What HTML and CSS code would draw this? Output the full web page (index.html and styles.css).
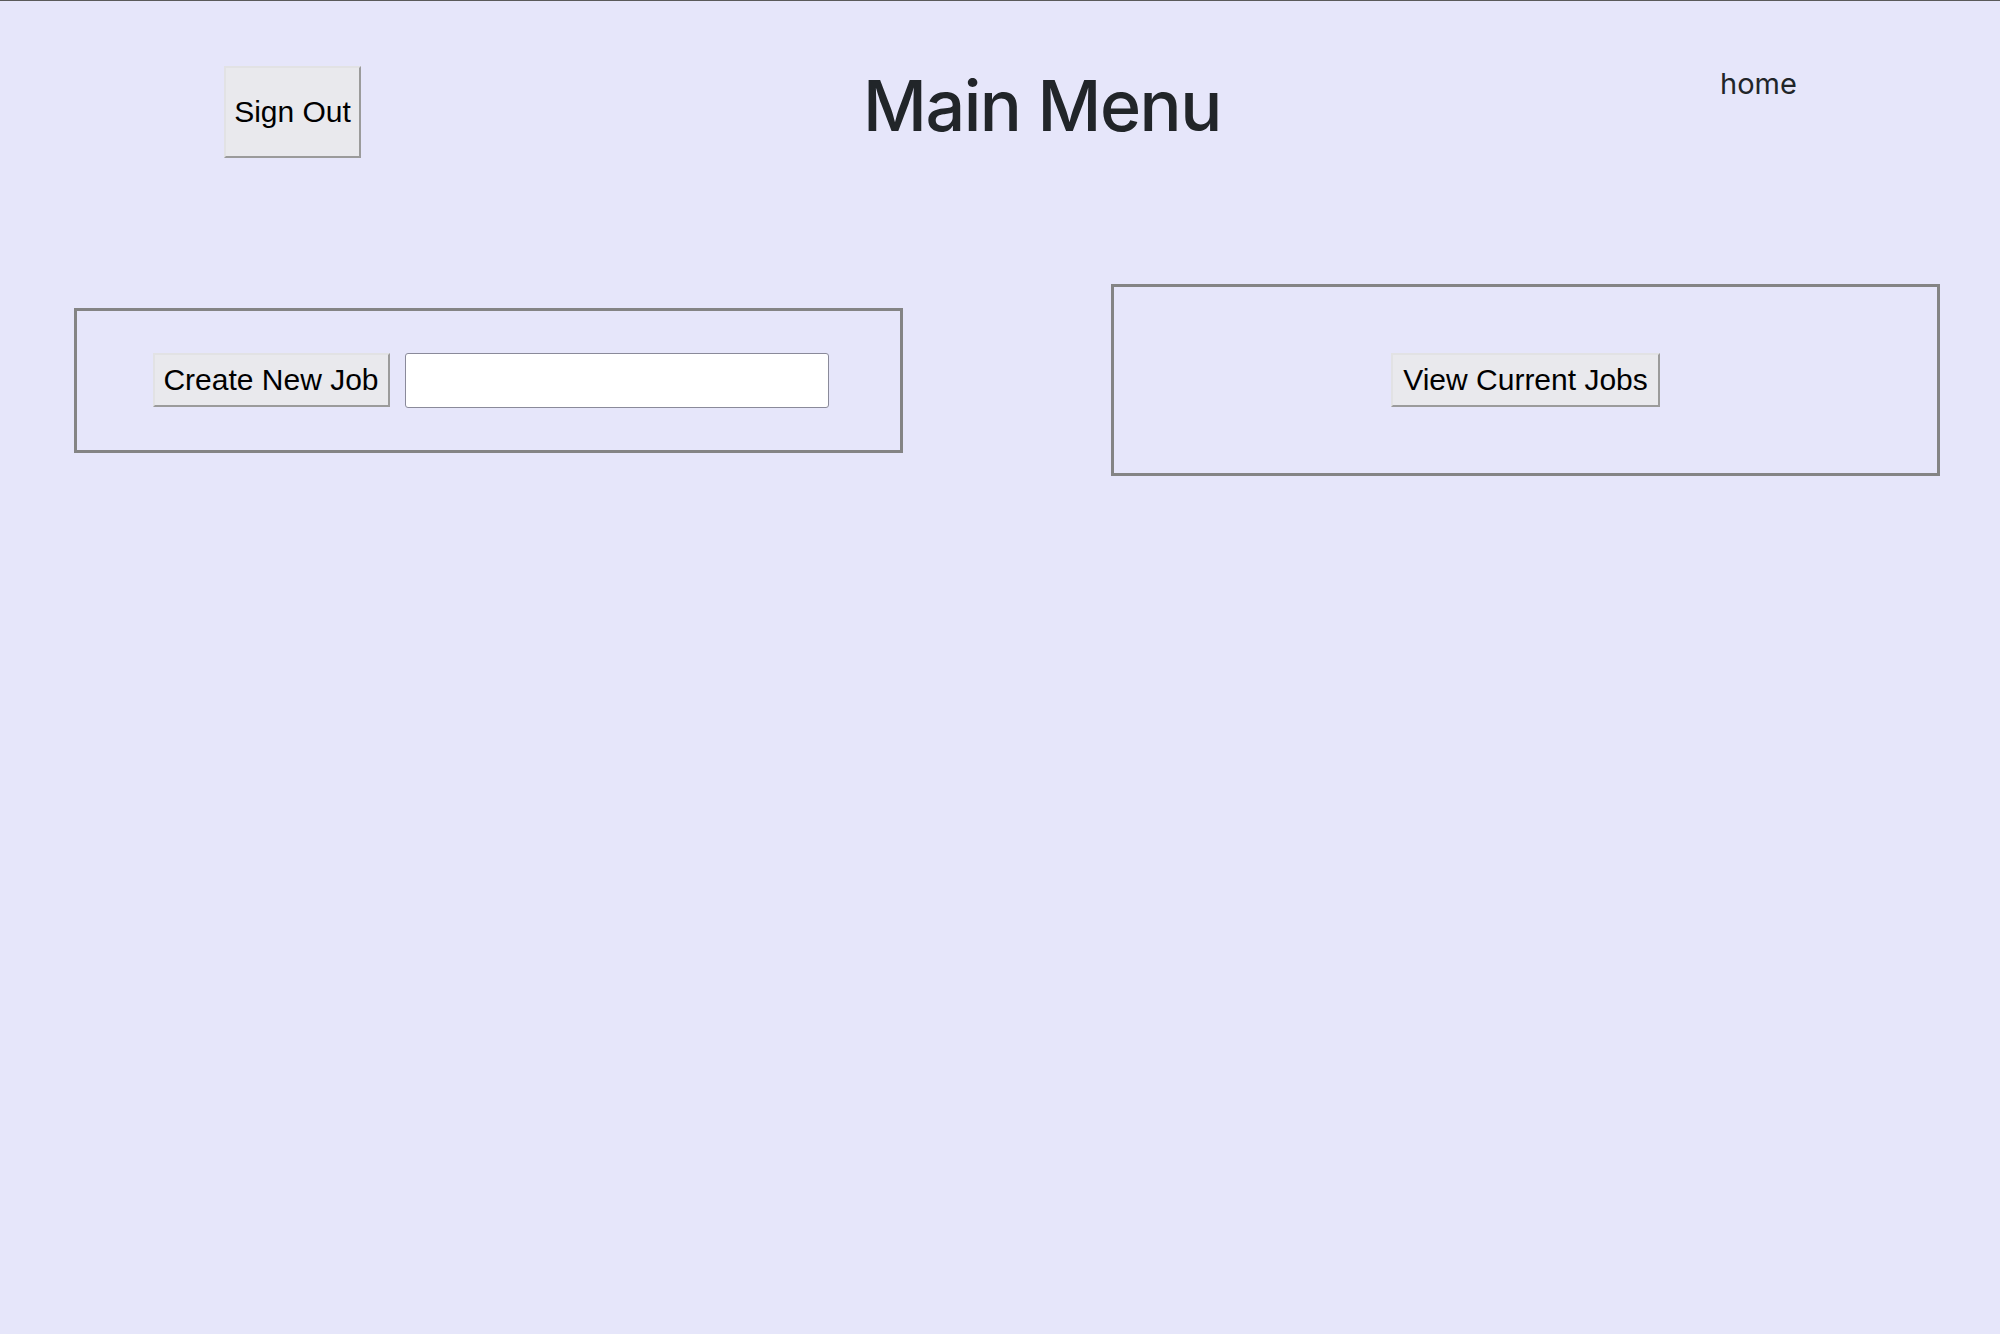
FILE: index.html
```html
<!DOCTYPE html>
<html lang="en">
<head>
<meta charset="utf-8">
<title>Main Menu</title>
<link rel="stylesheet" href="styles.css">
</head>
<body>
<header class="header">
  <div class="header-left"><button class="btn btn-signout">Sign Out</button></div>
  <h1 class="title">Main Menu</h1>
  <a class="home-link" href="#">home</a>
</header>
<main class="panels">
  <section class="panel panel-create">
    <button class="btn btn-small">Create New Job</button>
    <input class="job-input" type="text">
  </section>
  <section class="panel panel-view">
    <button class="btn btn-small">View Current Jobs</button>
  </section>
</main>
</body>
</html>
```

FILE: styles.css
```css
html, body {
  margin: 0;
  padding: 0;
}
body {
  background: #e6e6fa;
  border-top: 1px solid #5a5a5a;
  min-height: 1333px;
  font-family: Inter, "Liberation Sans", sans-serif;
  color: #212529;
}
.header {
  display: grid;
  grid-template-columns: 361px 1359px 1fr;
  align-items: start;
  padding-top: 65px;
}
.header-left {
  display: flex;
  justify-content: flex-end;
}
.btn {
  font-family: "Liberation Sans", Arial, sans-serif;
  font-size: 30px;
  color: #000;
  background: #e9e9ed;
  border-style: solid;
  border-width: 2px;
  border-color: #e2e2e4 #9b9b9b #9b9b9b #e2e2e4;
  margin: 0;
  box-sizing: border-box;
  padding: 0 8px;
  line-height: 1;
}
.btn-signout {
  width: 137px;
  height: 92px;
}
.btn-small {
  height: 54px;
}
.title {
  margin: 4px 0 0 502px;
  font-size: 70px;
  line-height: 72px;
  font-weight: 500;
  letter-spacing: -1.5px;
  color: #212529;
}
.home-link {
  font-size: 29px;
  line-height: 29px;
  color: #212529;
  text-decoration: none;
  margin-top: 3px;
}
.panels {
  display: flex;
  align-items: center;
  gap: 208px;
  padding-left: 74px;
  margin-top: 126px;
}
.panel {
  box-sizing: border-box;
  width: 829px;
  border: 3px solid #848484;
  display: flex;
  align-items: center;
  justify-content: center;
  gap: 15px;
}
.panel-create {
  height: 145px;
  padding-left: 4px;
}
.panel-view {
  height: 192px;
}
.btn-small:first-child {
  width: 237px;
}
.panel-view .btn-small {
  width: 269px;
}
.job-input {
  box-sizing: border-box;
  width: 424px;
  height: 55px;
  margin: 0;
  background: #fff;
  border: 1px solid #8a8a9a;
  border-radius: 3px;
  outline: none;
}
```
